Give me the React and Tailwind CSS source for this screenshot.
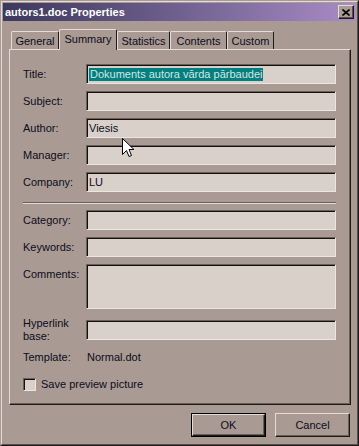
import React from 'react';

const Field = ({ label, children, h = 'h-[20px]', top = false }) => (
  <div className={`flex ${top ? 'items-start' : 'items-center'}`}>
    <div className={`w-[63px] shrink-0 leading-[13px] ${top ? 'pt-[4px]' : ''}`}>{label}</div>
    <div
      className={`w-[250px] ${h} bg-[#d9d0ca] border border-t-[#6a5e58] border-l-[#6a5e58] border-r-[#ece6e2] border-b-[#ece6e2] shadow-[inset_1px_1px_0_#141010] pl-[2px] flex items-center leading-[13px]`}
    >
      {children}
    </div>
  </div>
);

const Tab = ({ label, w, active }) =>
  active ? (
    <div
      className={`${w} h-[21px] -mb-px relative z-10 bg-[#a99b93] border-l border-t border-[#e4dcd6] border-r border-r-[#1e1a18] rounded-t-[2px] flex items-start justify-center pt-[3px] leading-[13px]`}
    >
      {label}
    </div>
  ) : (
    <div
      className={`${w} h-[18px] bg-[#a99b93] border-l border-t border-[#e4dcd6] border-r border-r-[#1e1a18] rounded-t-[2px] flex items-start justify-center pt-[3px] leading-[13px]`}
    >
      {label}
    </div>
  );

export default function App() {
  return (
    <div className="w-[359px] h-[446px] bg-[#a99b93] border border-t-[#a99b93] border-l-[#a99b93] border-r-[#1e1a18] border-b-[#1e1a18] font-['Liberation_Sans',Arial,sans-serif] text-[11px] text-[#0c0c20] relative overflow-hidden">
      <div className="h-full border border-t-[#e4dcd6] border-l-[#e4dcd6] border-r-[#5a504a] border-b-[#5a504a] p-px flex flex-col">
        {/* title bar */}
        <div className="h-[18px] bg-gradient-to-r from-[#3c385c] to-[#a98cc6] flex items-center justify-between pl-[2px] pr-[2px]">
          <span className="text-white font-bold text-[11px] leading-[13px]">autors1.doc Properties</span>
          <div className="w-[16px] h-[14px] bg-[#a99b93] border border-t-[#e4dcd6] border-l-[#e4dcd6] border-r-[#1e1a18] border-b-[#1e1a18] shadow-[inset_-1px_-1px_0_#5a504a] flex items-center justify-center">
            <svg width="8" height="7" viewBox="0 0 8 7">
              <path d="M0.5 0.5 L7.5 6.5 M7.5 0.5 L0.5 6.5" stroke="#000" strokeWidth="1.6" />
            </svg>
          </div>
        </div>

        <div className="px-[6px]">
          {/* tabs */}
          <div className="mt-[8px] h-[20px] flex items-end pl-[2px]">
            <Tab label="General" w="w-[48px]" />
            <Tab label="Summary" w="w-[58px]" active />
            <Tab label="Statistics" w="w-[53px]" />
            <Tab label="Contents" w="w-[57px]" />
            <Tab label="Custom" w="w-[47px]" />
          </div>

          {/* panel */}
          <div className="w-[342px] h-[356px] border border-t-[#e4dcd6] border-l-[#e4dcd6] border-r-[#1e1a18] border-b-[#1e1a18] shadow-[inset_-1px_-1px_0_#6a5e58] pl-[13px] pt-[14px]">
            <div className="flex flex-col gap-[7px]">
              <Field label="Title:">
                <span className="bg-[#008080] text-[#d9e4e0] px-px">Dokuments autora vārda pārbaudei</span>
              </Field>
              <Field label="Subject:" />
              <Field label="Author:">Viesis</Field>
              <Field label="Manager:" />
              <Field label="Company:">LU</Field>
            </div>

            <div className="mt-[10px] w-[313px] border-t border-t-[#6a5e58] border-b border-b-[#e4dcd6]" />

            <div className="mt-[6px] flex flex-col gap-[7px]">
              <Field label="Category:" />
              <Field label="Keywords:" />
              <Field label="Comments:" h="h-[45px]" top />
            </div>

            <div className="mt-[8px]">
              <Field label={<span>Hyperlink<br />base:</span>} />
            </div>

            <div className="mt-[8px] flex leading-[13px]">
              <div className="w-[63px] shrink-0">Template:</div>
              <div className="pl-px">Normal.dot</div>
            </div>

            <div className="mt-[14px] flex items-center gap-[5px]">
              <div className="w-[13px] h-[13px] bg-[#d9d0ca] border border-t-[#6a5e58] border-l-[#6a5e58] border-r-[#ece6e2] border-b-[#ece6e2] shadow-[inset_1px_1px_0_#141010]" />
              <span className="leading-[13px]">Save preview picture</span>
            </div>
          </div>

          {/* buttons */}
          <div className="mt-[8px] w-[342px] flex justify-end gap-[9px] pr-px">
            <div className="w-[75px] h-[24px] border border-black">
              <div className="h-full border border-t-[#e4dcd6] border-l-[#e4dcd6] border-r-[#1e1a18] border-b-[#1e1a18] shadow-[inset_-1px_-1px_0_#6a5e58] flex items-center justify-center">
                OK
              </div>
            </div>
            <div className="w-[75px] h-[24px] border border-t-[#e4dcd6] border-l-[#e4dcd6] border-r-[#1e1a18] border-b-[#1e1a18] shadow-[inset_-1px_-1px_0_#6a5e58] flex items-center justify-center">
              Cancel
            </div>
          </div>
        </div>
      </div>

      {/* mouse pointer */}
      <svg className="absolute left-[121px] top-[137px]" width="13" height="20" viewBox="0 0 13 20">
        <path d="M0.5 0.5 L0.5 16.5 L4.5 12.5 L7 18.5 L9.5 17.5 L7 11.5 L12 11.5 Z" fill="#fff" stroke="#000" strokeWidth="1" />
      </svg>
    </div>
  );
}
